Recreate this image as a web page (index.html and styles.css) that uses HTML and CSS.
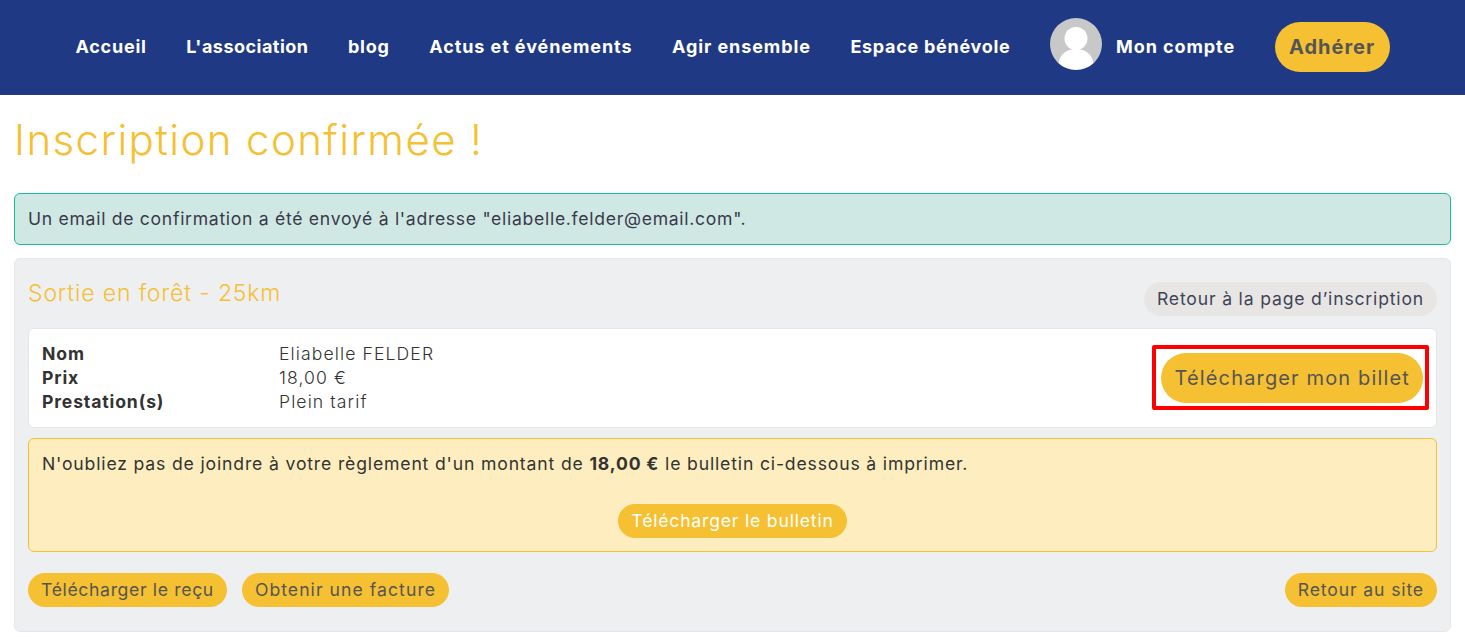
FILE: index.html
```
<!DOCTYPE html>
<html lang="fr">
<head>
<meta charset="utf-8">
<title>Inscription confirmée !</title>
<link rel="stylesheet" href="styles.css">
</head>
<body>
<header class="topbar">
  <nav class="nav">
    <a class="nav-link" href="#">Accueil</a>
    <a class="nav-link nav-narrow" href="#">L'association</a>
    <a class="nav-link" href="#">blog</a>
    <a class="nav-link nav-wide" href="#">Actus et événements</a>
    <a class="nav-link nav-wide" href="#">Agir ensemble</a>
    <a class="nav-link nav-snug" href="#">Espace bénévole</a>
    <a class="nav-link nav-wide account" href="#">
      <svg class="avatar" viewBox="0 0 52 52" aria-hidden="true">
        <circle cx="26" cy="26" r="26" fill="#c8c8c8"/>
        <circle cx="26" cy="20.5" r="11.5" fill="#fff"/>
        <path d="M8.5 45 C10 36 17 31 26 31 C35 31 42 36 43.5 45 A26 26 0 0 1 8.5 45 Z" fill="#fff"/>
      </svg>
      <span>Mon compte</span>
    </a>
    <a class="join" href="#">Adhérer</a>
  </nav>
</header>
<main class="page">
  <h1 class="title">Inscription confirmée !</h1>
  <div class="alert">Un email de confirmation a été envoyé à l'adresse "eliabelle.felder@email.com".</div>
  <section class="panel">
    <div class="panel-head">
      <h2 class="event">Sortie en forêt - 25km</h2>
      <a class="pill pill-grey" href="#">Retour à la page d’inscription</a>
    </div>
    <div class="ticket">
      <dl class="details">
        <dt>Nom</dt><dd>Eliabelle FELDER</dd>
        <dt>Prix</dt><dd>18,00 €</dd>
        <dt>Prestation(s)</dt><dd>Plein tarif</dd>
      </dl>
      <a class="pill pill-large" href="#">Télécharger mon billet</a>
    </div>
    <div class="notice">
      <p class="notice-text">N'oubliez pas de joindre à votre règlement d'un montant de <strong>18,00 €</strong> le bulletin ci-dessous à imprimer.</p>
      <div class="notice-action"><a class="pill pill-light" href="#">Télécharger le bulletin</a></div>
    </div>
    <div class="actions">
      <div class="actions-left">
        <a class="pill pill-tight" href="#">Télécharger le reçu</a>
        <a class="pill pill-wide" href="#">Obtenir une facture</a>
      </div>
      <a class="pill pill-back" href="#">Retour au site</a>
    </div>
  </section>
</main>
</body>
</html>
```
FILE: styles.css
```
* { box-sizing: border-box; }
html, body { margin: 0; padding: 0; }
body {
  font-family: Inter, "Liberation Sans", sans-serif;
  font-size: 17.6px;
  color: #333;
  background: #fff;
  letter-spacing: 0.7px;
}
a { text-decoration: none; }

.topbar { height: 95px; background: #1f3984; }
.nav { height: 95px; padding-bottom: 1px; display: flex; align-items: center; justify-content: center; gap: 39.5px; }
.nav-link { padding-bottom: 2px; color: #fff; font-weight: 700; font-size: 18px; letter-spacing: 0.78px; white-space: nowrap; }
.nav-narrow { letter-spacing: 0.48px; }
.nav-wide { letter-spacing: 0.92px; }
.nav-snug { letter-spacing: 0.72px; }
.account { display: flex; align-items: center; gap: 14px; }
.avatar { width: 52px; height: 52px; display: block; margin-bottom: 4px; }
.join {
  width: 115px; height: 50px; border-radius: 25px;
  background: #f5c031; color: #555;
  font-weight: 700; font-size: 20px; letter-spacing: 1px;
  display: flex; align-items: center; justify-content: center;
}

.page { padding: 0 14px; }
.title { margin: 0; padding-top: 20px; height: 98px; font-size: 42px; line-height: 50px; font-weight: 300; letter-spacing: 1.4px; color: #f5c031; }

.alert {
  height: 52px; padding: 0 13px 2px; display: flex; align-items: center;
  background: #cfe8e3; border: 1px solid #1abc9c; border-radius: 6px;
  color: #3a3a4a;
}

.panel {
  margin-top: 13px; height: 374px; padding: 14px 13px 0;
  background: #eeeff1; border: 1px solid #e6e6e6; border-radius: 6px;
}
.panel-head { height: 55px; display: flex; justify-content: space-between; align-items: flex-start; }
.event { margin: 6px 0 0; font-size: 23px; line-height: 28px; font-weight: 300; letter-spacing: 0.85px; color: #f5c031; }

.pill {
  display: inline-flex; align-items: center; height: 34px; padding: 0 13px 2px;
  border-radius: 17px; background: #f5c031; color: #555; white-space: nowrap;
  letter-spacing: 0.8px;
}
.panel-head .pill { margin-top: 9px; }
.pill-grey { background: #e8e6e4; color: #3f4456; letter-spacing: 0.82px; }
.pill-light { color: #fff; }
.pill-tight { letter-spacing: 0.65px; }
.pill-wide { letter-spacing: 1.05px; }
.pill-back { letter-spacing: 0.87px; }
.pill-large { position: relative; height: 50px; padding: 0 13px; border-radius: 25px; font-size: 20px; letter-spacing: 1.15px; }
.pill-large::after {
  content: ""; position: absolute; left: -9px; right: -6px; top: -8px; bottom: -7px;
  border: 4px solid #f00; border-radius: 2px;
}

.ticket {
  height: 100px; padding: 0 13px; display: flex; justify-content: space-between; align-items: center;
  background: #fff; border: 1px solid #e6e6e6; border-radius: 6px;
}
.details { margin: 0; display: grid; grid-template-columns: 237px auto; line-height: 24px; }
.details dt { font-weight: 700; color: #333; letter-spacing: 0.85px; }
.details dd { margin: 0; font-weight: 300; color: #333; letter-spacing: 1.1px; }

.notice {
  margin-top: 10px; height: 114px; padding: 13px 13px 0;
  background: #feeebf; border: 1px solid #f5c031; border-radius: 6px;
}
.notice-text { margin: 0; line-height: 24px; color: #333; letter-spacing: 0.84px; }
.notice-action { margin-top: 28px; display: flex; justify-content: center; }

.actions { margin-top: 21px; display: flex; justify-content: space-between; }
.actions-left { display: flex; gap: 15px; }
```
